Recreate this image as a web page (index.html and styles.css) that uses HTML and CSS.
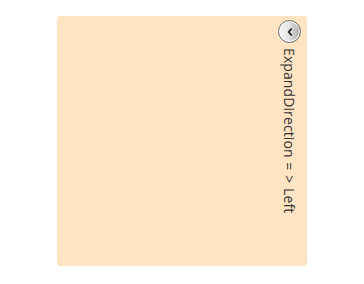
FILE: index.html
```html
<!DOCTYPE html>
<html lang="en">

<head>
    <meta charset="UTF-8">
    <title>Expander</title>
    <link rel="stylesheet" href="styles.css">
</head>

<body>
    <main>
        <div id="expander">
            <div id="header">
                <button id="toggle" aria-label="Expand">
                    <svg viewBox="0 0 10 10" fill="none" stroke="currentColor" stroke-width="1.8" stroke-linecap="round" stroke-linejoin="round">
                        <polyline points="6.2 2.2 3.6 5 6.2 7.8"></polyline>
                    </svg>
                </button>
                <div id="caption">ExpandDirection = &gt; Left</div>
            </div>
        </div>
    </main>
</body>

</html>
```

FILE: styles.css
```css
html,
body {
    margin: 0;
    padding: 0;
    background-color: white;
    font-family: "Open Sans", "Noto Sans", sans-serif;
}

main {
    padding: 16px 0 0 57px;
}

#expander {
    width: 250px;
    height: 250px;
    background-color: bisque;
    border-radius: 3px;
    display: flex;
    justify-content: flex-end;
    box-sizing: border-box;
    padding: 4px 6px 0 0;
}

#header {
    display: flex;
    flex-direction: column;
    align-items: center;
    gap: 5px;
}

#toggle {
    width: 23px;
    height: 23px;
    padding: 0;
    border: 1px solid #6b6b6b;
    border-radius: 50%;
    background: linear-gradient(to right, #f4f4f4 0%, #e6e6e6 45%, #a9a9a9 100%);
    box-shadow: inset 0 0 0 1px #ffffff;
    color: #222;
    display: flex;
    justify-content: center;
    align-items: center;
}

#toggle svg {
    width: 10px;
    height: 10px;
}

#caption {
    writing-mode: vertical-rl;
    font-size: 14px;
    letter-spacing: 0.1px;
    word-spacing: 1px;
    color: #333;
    white-space: nowrap;
}
```
